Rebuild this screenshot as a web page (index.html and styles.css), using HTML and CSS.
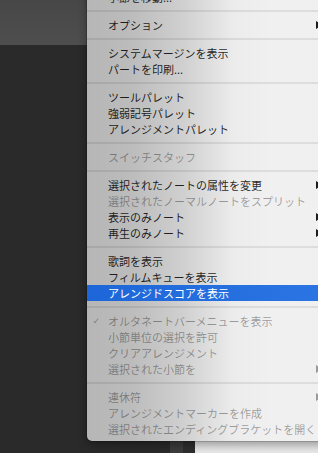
FILE: index.html
```html
<!DOCTYPE html>
<html lang="ja">
<head>
  <meta charset="UTF-8">
  <title>メニュー</title>
  <link rel="stylesheet" href="styles.css">
</head>
<body>
  <div class="desktop">
    <div class="side-panel">
      <div class="toolbar"></div>
      <div class="panel-body"></div>
    </div>
    <div class="strip strip-light"></div>
    <div class="strip strip-dark"></div>
    <div class="document"></div>

    <div class="menu">
      <div class="item"><span class="check"></span><span class="label">小節を移動...</span></div>
      <div class="sep"></div>
      <div class="item"><span class="check"></span><span class="label">オプション</span><span class="arrow"></span></div>
      <div class="sep"></div>
      <div class="item"><span class="check"></span><span class="label">システムマージンを表示</span></div>
      <div class="item"><span class="check"></span><span class="label">パートを印刷...</span></div>
      <div class="sep"></div>
      <div class="item"><span class="check"></span><span class="label">ツールパレット</span></div>
      <div class="item"><span class="check"></span><span class="label">強弱記号パレット</span></div>
      <div class="item"><span class="check"></span><span class="label">アレンジメントパレット</span></div>
      <div class="sep"></div>
      <div class="item disabled"><span class="check"></span><span class="label">スイッチスタッフ</span></div>
      <div class="sep"></div>
      <div class="item"><span class="check"></span><span class="label">選択されたノートの属性を変更</span><span class="arrow"></span></div>
      <div class="item disabled"><span class="check"></span><span class="label">選択されたノーマルノートをスプリット</span></div>
      <div class="item"><span class="check"></span><span class="label">表示のみノート</span><span class="arrow"></span></div>
      <div class="item"><span class="check"></span><span class="label">再生のみノート</span><span class="arrow"></span></div>
      <div class="sep"></div>
      <div class="item"><span class="check"></span><span class="label">歌詞を表示</span></div>
      <div class="item"><span class="check"></span><span class="label">フィルムキューを表示</span></div>
      <div class="item active"><span class="check"></span><span class="label">アレンジドスコアを表示</span></div>
      <div class="sep"></div>
      <div class="item disabled"><span class="check">✓</span><span class="label">オルタネートバーメニューを表示</span></div>
      <div class="item disabled"><span class="check"></span><span class="label">小節単位の選択を許可</span></div>
      <div class="item disabled"><span class="check"></span><span class="label">クリアアレンジメント</span></div>
      <div class="item disabled"><span class="check"></span><span class="label">選択された小節を</span><span class="arrow"></span></div>
      <div class="sep"></div>
      <div class="item disabled"><span class="check"></span><span class="label">連休符</span><span class="arrow"></span></div>
      <div class="item disabled"><span class="check"></span><span class="label">アレンジメントマーカーを作成</span></div>
      <div class="item disabled"><span class="check"></span><span class="label">選択されたエンディングブラケットを開く</span></div>
    </div>
  </div>
</body>
</html>
```

FILE: styles.css
```css
* {
  box-sizing: border-box;
  margin: 0;
  padding: 0;
}

body {
  width: 318px;
  height: 453px;
  overflow: hidden;
  background: #2a2a2a;
  font-family: 'Noto Sans CJK JP', 'Noto Sans', sans-serif;
}

.desktop {
  position: relative;
  display: flex;
  width: 318px;
  height: 453px;
}

.side-panel {
  display: flex;
  flex-direction: column;
  width: 170px;
}

.toolbar {
  height: 45px;
  background: linear-gradient(to bottom, #474747, #4e4e4e);
}

.panel-body {
  flex: 1;
  background: #2a2a2a;
}

.strip {
  width: 13px;
}

.strip-light {
  background: #3c3c3c;
}

.strip-dark {
  width: 12px;
  background: #2e2e2e;
}

.document {
  flex: 1;
  background: #e9e9e9;
}

/* the popup menu lies over the window */
.menu {
  position: absolute;
  left: 87px;
  top: -15px;
  width: 262px;
  padding: 4px 0;
  border-radius: 5px;
  background: linear-gradient(to right,
    #b6b6b6 0%,
    #bcbcbc 17%,
    #d0d0d0 37%,
    #ececec 56%,
    #f0f0f0 70%,
    #f0f0f0 100%);
  box-shadow:
    0 4px 10px rgba(0, 0, 0, 0.35),
    0 0 0 0.5px rgba(0, 0, 0, 0.3);
}

.item {
  display: grid;
  grid-template-columns: 21px 208px 10px;
  align-items: center;
  height: 16px;
  font-size: 11px;
  line-height: 16px;
  color: rgba(0, 0, 0, 0.86);
  white-space: nowrap;
}

.check {
  justify-self: end;
  margin-right: 8px;
  font-family: 'DejaVu Sans', sans-serif;
  font-size: 9px;
}

.label {
  overflow: visible;
}

.arrow {
  width: 0;
  height: 0;
  border-top: 4.5px solid transparent;
  border-bottom: 4.5px solid transparent;
  border-left: 7px solid #1c1c1c;
}

.disabled {
  color: rgba(0, 0, 0, 0.36);
}

.disabled .arrow {
  border-left-color: #9a9a9a;
}

.active {
  background: linear-gradient(to right, #1d66d9, #2c77e4);
  color: #fff;
}

.sep {
  height: 2px;
  margin: 5px 0;
  background: rgba(0, 0, 0, 0.08);
}
```
